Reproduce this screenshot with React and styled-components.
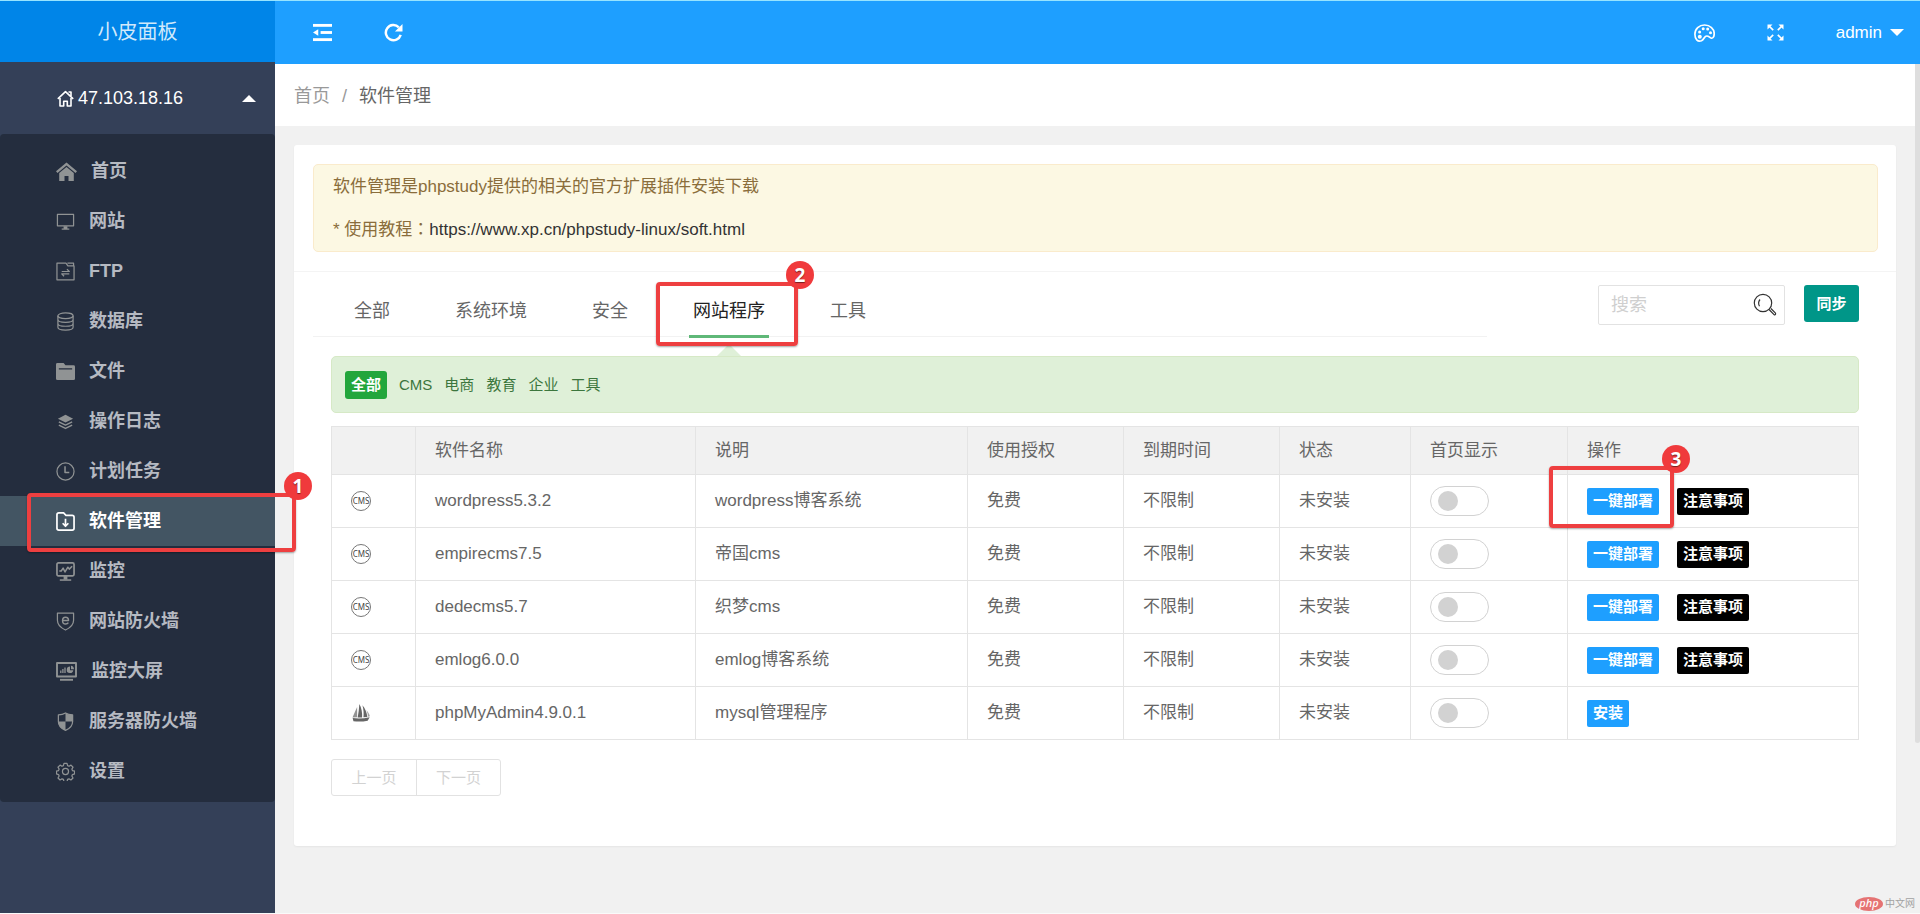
import React, { useState } from "react";
import styled, { createGlobalStyle, css } from "styled-components";

const GlobalStyle = createGlobalStyle`
  * { box-sizing: border-box; }
  body {
    margin: 0;
    background: #f1f1f1;
    color: #666;
    font-family: "Liberation Sans", "Noto Sans CJK SC", sans-serif;
    font-size: 17px;
    line-height: 24px;
  }
  a { color: inherit; text-decoration: none; }
  button, input { font: inherit; color: inherit; }
  button { border: 0; padding: 0; background: none; cursor: pointer; }
  svg { display: block; }
`;

/* ---------- icons ---------- */

const Icon = ({ size = 19, width, box = "0 0 20 20", label, children }) => (
  <svg
    width={width || size}
    height={size}
    viewBox={box}
    fill="none"
    stroke="currentColor"
    strokeWidth="1.3"
    strokeLinejoin="round"
    aria-label={label}
    aria-hidden={label ? undefined : true}
  >
    {children}
  </svg>
);

const FoldIcon = () => (
  <Icon>
    <g fill="currentColor" stroke="none">
      <rect x="0" y="1" width="20" height="3" />
      <rect x="8" y="8.500" width="12" height="3" />
      <rect x="0" y="16" width="20" height="3" />
      <path d="M0 10 5.500 6.500v7z" />
    </g>
  </Icon>
);

const RefreshIcon = () => (
  <Icon>
    <path d="M17.600 12.500A8 8 0 1 1 15.600 4.500" strokeWidth="2.600" />
    <path d="M19.500 1v8h-8z" fill="currentColor" stroke="none" />
  </Icon>
);

const PaletteIcon = () => (
  <Icon size={18} width={21} box="0 0 21 18">
    <path
      d="M7.500 16.700C3.600 18.200.900 15 .900 10.300.900 5 5.200 1 10.500 1c5.700 0 9.700 3.900 9.700 8.500 0 3.200-1.200 5-2.900 4.700-1.700-.400-2.300-2.200-4.600-2.200-2.500 0-2.400 3.500-5.200 4.700z"
      strokeWidth="1.700"
    />
    <g fill="currentColor" stroke="none">
      <circle cx="5.600" cy="8" r="1.500" />
      <circle cx="9.200" cy="4.800" r="1.500" />
      <circle cx="13.700" cy="5.100" r="1.500" />
      <circle cx="16.500" cy="8.800" r="1.500" />
      <circle cx="5.800" cy="12.700" r="2" />
    </g>
  </Icon>
);

const FullscreenIcon = () => (
  <Icon size={17} box="0 0 17 17">
    <path d="M1.500 1.500l4.700 4.700M15.500 1.500l-4.700 4.700M1.500 15.500l4.700-4.700M15.500 15.500l-4.700-4.700" strokeWidth="1.700" />
    <g fill="currentColor" stroke="none">
      <path d="M.500.500h5l-5 5zM16.500.500v5l-5-5zM.500 16.500v-5l5 5zM16.500 16.500h-5l5-5z" />
    </g>
  </Icon>
);

const HouseOutlineIcon = () => (
  <Icon size={17} box="0 0 17 17">
    <g strokeWidth="1.600">
      <path d="M.800 8.800 8.500 1.600l7.700 7.200" />
      <path d="M3 8v8h3.700v-4.700h3.600V16H14V8M14 6V2h-2.500" />
    </g>
  </Icon>
);

const HomeIcon = () => (
  <Icon size={19} width={21} box="0 0 21 19">
    <g fill="currentColor" stroke="none">
      <path d="M10.500.500 0 9.300l1.500 1.700 9-7.500 9 7.500L21 9.300z" />
      <path d="M10.500 5 3.200 11v8h5.300v-5h4v5h5.300v-8z" />
    </g>
  </Icon>
);

const MonitorIcon = () => (
  <Icon>
    <rect x="1.500" y="2.500" width="17" height="12" />
    <path d="M8 15h4v3H8z" fill="currentColor" stroke="none" />
    <path d="M6 18h8" />
  </Icon>
);

const FtpIcon = () => (
  <Icon>
    <path d="M1 18.700V1.300h9.500l2 2.700H19v14.700zM12 1.300h6.500V4" />
    <path d="M6 10h8l-2.500-2.500M14 12.500H6l2.500 2.500" />
  </Icon>
);

const DatabaseIcon = () => (
  <Icon>
    <ellipse cx="10" cy="4" rx="8" ry="3" />
    <path d="M2 4v12c0 1.700 3.600 3 8 3s8-1.300 8-3V4M2 8c0 1.700 3.600 3 8 3s8-1.300 8-3M2 12c0 1.700 3.600 3 8 3s8-1.300 8-3" />
  </Icon>
);

const FolderIcon = () => (
  <Icon>
    <path
      fillRule="evenodd"
      d="M0 2.500Q0 1 1.500 1H8l2 2.500h8.500Q20 3.500 20 5v12.500q0 1.500-1.500 1.500h-17Q0 19 0 17.500zM3 6.500V8h14V6.500z"
      fill="currentColor"
      stroke="none"
    />
  </Icon>
);

const LayersIcon = () => (
  <Icon>
    <path d="M10 3 18 7l-8 4-8-4z" fill="currentColor" stroke="none" />
    <path d="M3 10.300l7 3.500 7-3.500M3 13.800l7 3.500 7-3.500" strokeWidth="1.500" />
  </Icon>
);

const ClockIcon = () => (
  <Icon>
    <circle cx="10" cy="10" r="9" />
    <path d="M9.500 4.500v6.500H14" strokeWidth="1.600" />
  </Icon>
);

const DownloadFolderIcon = () => (
  <Icon>
    <path d="M1 17V3q0-2 2-2h5l2.500 2.500H17q2 0 2 2V17q0 2-2 2H3q-2 0-2-2z" strokeWidth="1.800" />
    <path d="M10 7v8M7 11.800l3 3.200 3-3.200" strokeWidth="1.800" />
  </Icon>
);

const ChartScreenIcon = () => (
  <Icon>
    <rect x="1" y="1" width="18" height="13.500" rx="1.500" strokeWidth="1.800" />
    <path d="M3.500 9.500h2l2-3 2 4 3-5 1.500 2 3-3" strokeWidth="1.600" />
    <path d="M8 14.500h4v4H8z" fill="currentColor" stroke="none" />
    <path d="M4 19h12" strokeWidth="1.600" />
  </Icon>
);

const ShieldEIcon = () => (
  <Icon>
    <path d="M1.500 1.300h17v7.500c0 4.700-3.500 8-8.500 10.200C5 16.800 1.500 13.500 1.500 8.800z" />
    <path d="M7 9h6.200c0-2.300-1.300-3.500-3.200-3.500S6.900 7 6.900 9.100s1.300 3.500 3.300 3.500c1.300 0 2.200-.500 2.800-1.500" strokeWidth="1.500" />
  </Icon>
);

const BigScreenIcon = () => (
  <Icon size={19} width={21} box="0 0 21 19">
    <rect x="1" y="1" width="19" height="13.500" strokeWidth="1.900" />
    <path d="M4.800 8.500v2.500M6.900 7v4M9 5.500v5.500" />
    <path d="M14 4.500a3.300 3.300 0 1 0 3.300 3.800H14z" fill="currentColor" stroke="none" />
    <path d="M15 3.800v3.500h3C17.800 5.200 16.800 4 15 3.800z" fill="currentColor" stroke="none" />
    <path d="M4 17.800h13" strokeWidth="1.900" />
  </Icon>
);

const ShieldIcon = () => (
  <Icon>
    <path d="M10 1c2.300 1.500 4.500 2 7.500 2v7c0 4.500-3 7.500-7.500 9.300C5.500 17.500 2.500 14.500 2.500 10V3C5.500 3 7.700 2.500 10 1z" />
    <path d="M10 1v9h7.500V3C14.500 3 12.300 2.500 10 1zM2.500 10H10v9.300C5.500 17.500 2.500 14.500 2.500 10z" fill="currentColor" stroke="none" />
  </Icon>
);

const GearIcon = () => (
  <Icon>
    <circle cx="10" cy="10" r="3.200" />
    <path d="M8.400 1.500h3.200l.600 2.300 1.500.700 2.100-1.200 2.100 2.200-1.200 2 .600 1.500 2.300.500v3.100l-2.300.600-.600 1.500 1.200 2.100-2.200 2.100-2-1.200-1.500.600-.600 2.300H8.400l-.600-2.300-1.500-.600-2 1.200-2.200-2.100 1.200-2.100-.600-1.500-2.200-.600V9.500L2.700 9l.600-1.500-1.200-2 2.200-2.200 2 1.200 1.500-.700z" />
  </Icon>
);

const SearchIcon = () => (
  <Icon size={24} box="0 0 24 24">
    <circle cx="10" cy="10" r="8.700" strokeWidth="1.200" />
    <path d="M7 6.500c-1.500 1.800-1.700 4.500-.500 6.700" strokeWidth="1.200" />
    <path d="M16 16.500l5.300 5.300q1.700.300 1.200-1.700l-4.600-4.600" strokeWidth="1.200" />
  </Icon>
);

const SailIcon = () => (
  <Icon size={20} box="0 0 18 18" label="phpMyAdmin">
    <g fill="currentColor" stroke="none">
      <path d="M5.500 3.500 1.300 13l4.200-.200z" opacity=".7" />
      <path d="M7.500 1c-.300 4.500-.700 8-1.500 12l4 .100C10.300 8.800 9.500 4.500 7.500 1z" />
      <path d="M10.300 2c1 3.500 1.300 7 .900 10.800l3.500-.300C14.300 8.500 12.800 5 10.300 2z" />
      <path d="M13.800 6.500c.900 1.800 1.400 3.700 1.500 5.800l1.700-.300c-.500-2.300-1.700-4.200-3.200-5.500z" opacity=".6" />
      <path d="M1.500 13.600c4.500.600 10 .500 15.300-.700l-1.800 3c-4.500.900-8.500.900-12.800.500z" />
    </g>
  </Icon>
);

/* ---------- frame ---------- */

const Page = styled.div`
  position: relative;
  display: flex;
  min-height: 100vh;
  border-top: 1px solid #97e4ff;
  border-bottom: 1px solid #fafafa;
`;

const Sidebar = styled.aside`
  position: relative;
  z-index: 2;
  flex: 0 0 275px;
  background: #344058;
`;

const Brand = styled.h1`
  display: flex;
  align-items: center;
  justify-content: center;
  height: 61px;
  margin: 0;
  background: #0085e8;
  color: #d0e9fb;
  font-size: 20px;
  font-weight: 400;
`;

const Host = styled.button`
  display: flex;
  align-items: center;
  gap: 4px;
  width: 100%;
  height: 72px;
  padding: 0 19px 0 57px;
  color: #fff;
  font-size: 18px;
`;

const Caret = styled.span`
  border: 7px solid transparent;
  ${({ $up }) =>
    $up
      ? css`
          border-top-width: 0;
          border-bottom-color: #fff;
          margin-left: auto;
        `
      : css`
          border-bottom-width: 0;
          border-top-color: #fff;
        `}
`;

const Menu = styled.nav`
  padding: 12px 0 6px;
  border-radius: 4px;
  background: #242d3e;
`;

const MenuLink = styled.a`
  position: relative;
  display: flex;
  align-items: center;
  gap: 14px;
  height: 50px;
  padding-left: 56px;
  font-size: 18px;
  font-weight: 700;
  color: ${({ $active }) => ($active ? "#fff" : "#b6bac2")};
  background: ${({ $active }) => ($active ? "#435563" : "transparent")};
  svg { color: ${({ $active }) => ($active ? "#fff" : "#909394")}; }
`;

const Main = styled.div`
  flex: 1;
  min-width: 0;
  display: flex;
  flex-direction: column;
`;

const TopBar = styled.header`
  display: flex;
  align-items: center;
  justify-content: space-between;
  height: 63px;
  padding: 0 16px 0 38px;
  background: #1e9fff;
  color: #fff;
`;

const BarGroup = styled.div`
  display: flex;
  align-items: center;
  gap: 52px;
`;

const BarButton = styled.button`
  display: flex;
  align-items: center;
  gap: 8px;
`;

const Scroller = styled.div`
  flex: 1;
  display: flex;
`;

const Content = styled.div`
  flex: 1;
  min-width: 0;
`;

const ScrollTrack = styled.div`
  flex: 0 0 5px;
`;

const ScrollThumb = styled.div`
  height: 80%;
  border-radius: 0 0 3px 3px;
  background: #dedede;
`;

const Breadcrumb = styled.nav`
  display: flex;
  align-items: center;
  gap: 12px;
  height: 62px;
  padding: 2px 0 0 19px;
  background: #fff;
  font-size: 18px;
  color: #999;
  strong { font-weight: 400; color: #666; }
`;

const Card = styled.main`
  margin: 19px;
  padding-bottom: 50px;
  border-radius: 3px;
  background: #fff;
  box-shadow: 0 1px 2px rgba(0, 0, 0, 0.05);
`;

/* ---------- content ---------- */

const NoticeArea = styled.div`
  padding: 19px 18px 19px 19px;
  border-bottom: 1px solid #f4f4f4;
`;

const Notice = styled.div`
  padding: 0 19px;
  border: 1px solid #faebcc;
  border-radius: 5px;
  background: #fcf8e3;
  color: #8a6d3b;
  line-height: 43px;
  p { margin: 0; }
  a { color: #333; }
`;

const CenteredColon = styled.span`
  font-family: "Noto Sans CJK TC", sans-serif;
  line-height: 1;
`;

const TabRow = styled.div`
  display: flex;
  align-items: flex-start;
  padding: 13px 37px 0 19px;
`;

const Tabs = styled.div`
  flex: 1;
  display: flex;
  gap: 1px;
  height: 52px;
  margin-right: 111px;
  padding-left: 9px;
  border-bottom: 1px solid #f2f2f2;
`;

const Tab = styled.button`
  position: relative;
  padding: 0 32px;
  font-size: 18px;
  color: ${({ $active }) => ($active ? "#222" : "#666")};
  ${({ $active }) =>
    $active &&
    css`
      &::before {
        content: "";
        position: absolute;
        left: 28px;
        right: 28px;
        bottom: -2px;
        height: 3px;
        background: #5fb878;
      }
      &::after {
        content: "";
        position: absolute;
        left: calc(50% - 12px);
        bottom: -20px;
        border: 12px solid transparent;
        border-top-width: 0;
        border-bottom-color: #dff0d8;
      }
    `}
`;

const SearchBox = styled.label`
  display: flex;
  align-items: center;
  width: 187px;
  height: 40px;
  margin-right: 19px;
  padding: 0 7px 0 12px;
  border: 1px solid #e2e2e2;
  border-radius: 2px;
  color: #333;
`;

const SearchInput = styled.input`
  flex: 1;
  min-width: 0;
  padding: 0;
  border: 0;
  outline: 0;
  background: none;
  font-size: 18px;
  &::placeholder { color: #cfcfcf; }
`;

const SyncButton = styled.button`
  width: 55px;
  height: 37px;
  border-radius: 3px;
  background: #009688;
  color: #fff;
  font-size: 15px;
  font-weight: 700;
`;

const Section = styled.section`
  padding: 19px 37px 0;
`;

const Filters = styled.div`
  display: flex;
  align-items: center;
  gap: 12px;
  height: 57px;
  margin-bottom: 13px;
  padding: 0 13px;
  border: 1px solid #d6e9c6;
  border-radius: 5px;
  background: #dff0d8;
  color: #3c763d;
`;

const Filter = styled.button`
  font-size: 15px;
  ${({ $active }) =>
    $active &&
    css`
      height: 28px;
      padding: 0 6px;
      border-radius: 3px;
      background: #23a63c;
      color: #fff;
      font-weight: 700;
    `}
`;

const Table = styled.table`
  width: 100%;
  table-layout: fixed;
  border-collapse: collapse;
  th, td {
    height: 53px;
    padding: 0 19px;
    border: 1px solid #e4e4e4;
    text-align: left;
    font-weight: 400;
  }
  th { height: 48px; background: #f1f1f1; }
`;

const CmsBadge = styled.span`
  display: flex;
  align-items: center;
  justify-content: center;
  width: 20px;
  height: 20px;
  border: 1px solid #777;
  border-radius: 50%;
  font-family: "Noto Sans", sans-serif;
  font-size: 8px;
  line-height: 8px;
  color: #444;
`;

const Switch = styled.input`
  appearance: none;
  display: block;
  width: 59px;
  height: 30px;
  margin: 0;
  padding: 4px 7px;
  border: 1px solid #d2d2d2;
  border-radius: 15px;
  background: #fff;
  cursor: pointer;
  &::before {
    content: "";
    display: block;
    width: 20px;
    height: 20px;
    border-radius: 50%;
    background: #d2d2d2;
  }
  &:checked { border-color: #5fb878; }
  &:checked::before { margin-left: auto; background: #5fb878; }
`;

const Actions = styled.div`
  display: flex;
  gap: 18px;
`;

const ActionButton = styled.button`
  position: relative;
  height: 27px;
  padding: 0 6px;
  border-radius: 2px;
  background: ${({ $dark }) => ($dark ? "#000" : "#1e9fff")};
  color: #fff;
  font-size: 15px;
  font-weight: 700;
`;

const Pager = styled.div`
  display: inline-flex;
  margin-top: 19px;
  border: 1px solid #e2e2e2;
  border-radius: 3px;
`;

const PageButton = styled.button`
  width: 84px;
  height: 35px;
  font-size: 15px;
  color: #d2d2d2;
  & + & { border-left: 1px solid #e2e2e2; }
`;

/* ---------- step markers drawn over the page ---------- */

const Marker = styled.span`
  position: absolute;
  z-index: 3;
  inset: ${({ $inset }) => $inset};
  border: 4px solid #ee3f40;
  border-radius: 4px;
  box-shadow: 0 1px 2px rgba(0, 0, 0, 0.35);
  pointer-events: none;
`;

const MarkerNumber = styled.span`
  position: absolute;
  top: -25px;
  right: -20px;
  display: flex;
  align-items: center;
  justify-content: center;
  width: 28px;
  height: 28px;
  border-radius: 50%;
  background: #f03a3c;
  color: #fff;
  font-family: "Noto Sans", sans-serif;
  font-size: 19px;
  font-weight: 700;
  text-shadow: 0 1px 1px rgba(0, 0, 0, 0.5);
`;

const Step = ({ n, inset }) => (
  <Marker $inset={inset}>
    <MarkerNumber>{n}</MarkerNumber>
  </Marker>
);

const Watermark = styled.div`
  position: absolute;
  right: 5px;
  bottom: 2px;
  display: flex;
  align-items: center;
  gap: 2px;
  color: #a2a2a2;
  font-size: 10px;
  line-height: 14px;
`;

const PhpMark = styled.span`
  width: 28px;
  height: 14px;
  border-radius: 50%;
  background: #e57373;
  color: #fff;
  font-family: "Noto Sans", sans-serif;
  font-size: 11px;
  font-style: italic;
  font-weight: 500;
  line-height: 12px;
  text-align: center;
`;

/* ---------- data ---------- */

const menu = [
  ["首页", HomeIcon],
  ["网站", MonitorIcon],
  ["FTP", FtpIcon],
  ["数据库", DatabaseIcon],
  ["文件", FolderIcon],
  ["操作日志", LayersIcon],
  ["计划任务", ClockIcon],
  ["软件管理", DownloadFolderIcon],
  ["监控", ChartScreenIcon],
  ["网站防火墙", ShieldEIcon],
  ["监控大屏", BigScreenIcon],
  ["服务器防火墙", ShieldIcon],
  ["设置", GearIcon],
];

const tabs = ["全部", "系统环境", "安全", "网站程序", "工具"];
const filters = ["全部", "CMS", "电商", "教育", "企业", "工具"];
const headings = ["", "软件名称", "说明", "使用授权", "到期时间", "状态", "首页显示", "操作"];
const columnWidths = [84, 280, 272, 156, 156, 131, 157];

const software = [
  { name: "wordpress5.3.2", about: "wordpress博客系统", cms: true, step: 3 },
  { name: "empirecms7.5", about: "帝国cms", cms: true },
  { name: "dedecms5.7", about: "织梦cms", cms: true },
  { name: "emlog6.0.0", about: "emlog博客系统", cms: true },
  { name: "phpMyAdmin4.9.0.1", about: "mysql管理程序", cms: false },
];

function SoftwareRow({ item }) {
  const [shown, setShown] = useState(false);
  return (
    <tr>
      <td>{item.cms ? <CmsBadge>CMS</CmsBadge> : <SailIcon />}</td>
      <td>{item.name}</td>
      <td>{item.about}</td>
      <td>免费</td>
      <td>不限制</td>
      <td>未安装</td>
      <td>
        <Switch
          type="checkbox"
          role="switch"
          aria-label={`首页显示 ${item.name}`}
          checked={shown}
          onChange={(e) => setShown(e.target.checked)}
        />
      </td>
      <td>
        <Actions>
          <ActionButton type="button">
            {item.cms ? "一键部署" : "安装"}
            {item.step && <Step n={item.step} inset="-22px -15px -13px -38px" />}
          </ActionButton>
          {item.cms && (
            <ActionButton type="button" $dark>
              注意事项
            </ActionButton>
          )}
        </Actions>
      </td>
    </tr>
  );
}

export default function App() {
  return (
    <>
      <GlobalStyle />
      <Page>
        <Sidebar>
          <Brand>小皮面板</Brand>
          <Host type="button">
            <HouseOutlineIcon />
            47.103.18.16
            <Caret $up />
          </Host>
          <Menu>
            {menu.map(([label, Glyph]) => {
              const active = label === "软件管理";
              return (
                <MenuLink key={label} href="#" $active={active}>
                  <Glyph />
                  {label}
                  {active && <Step n={1} inset="-3px -21px -6px 27px" />}
                </MenuLink>
              );
            })}
          </Menu>
        </Sidebar>

        <Main>
          <TopBar>
            <BarGroup>
              <BarButton type="button" aria-label="收起菜单"><FoldIcon /></BarButton>
              <BarButton type="button" aria-label="刷新"><RefreshIcon /></BarButton>
            </BarGroup>
            <BarGroup>
              <BarButton type="button" aria-label="主题"><PaletteIcon /></BarButton>
              <BarButton type="button" aria-label="全屏"><FullscreenIcon /></BarButton>
              <BarButton type="button">
                admin
                <Caret />
              </BarButton>
            </BarGroup>
          </TopBar>

          <Scroller>
            <Content>
              <Breadcrumb>
                <a href="#">首页</a>
                <span>/</span>
                <strong>软件管理</strong>
              </Breadcrumb>

              <Card>
                <NoticeArea>
                  <Notice>
                    <p>软件管理是phpstudy提供的相关的官方扩展插件安装下载</p>
                    <p>
                      * 使用教程<CenteredColon>：</CenteredColon>
                      <a href="#">https://www.xp.cn/phpstudy-linux/soft.html</a>
                    </p>
                  </Notice>
                </NoticeArea>

                <TabRow>
                  <Tabs>
                    {tabs.map((label) => {
                      const active = label === "网站程序";
                      return (
                        <Tab key={label} type="button" $active={active}>
                          {label}
                          {active && <Step n={2} inset="-3px -1px -10px -5px" />}
                        </Tab>
                      );
                    })}
                  </Tabs>
                  <SearchBox>
                    <SearchInput type="text" placeholder="搜索" aria-label="搜索" />
                    <SearchIcon />
                  </SearchBox>
                  <SyncButton type="button">同步</SyncButton>
                </TabRow>

                <Section>
                  <Filters>
                    {filters.map((label, i) => (
                      <Filter key={label} type="button" $active={i === 0}>
                        {label}
                      </Filter>
                    ))}
                  </Filters>

                  <Table>
                    <colgroup>
                      {columnWidths.map((width, i) => (
                        <col key={i} width={width} />
                      ))}
                      <col />
                    </colgroup>
                    <thead>
                      <tr>
                        {headings.map((label) => (
                          <th key={label} scope="col">{label}</th>
                        ))}
                      </tr>
                    </thead>
                    <tbody>
                      {software.map((item) => (
                        <SoftwareRow key={item.name} item={item} />
                      ))}
                    </tbody>
                  </Table>

                  <Pager>
                    <PageButton type="button" disabled>上一页</PageButton>
                    <PageButton type="button" disabled>下一页</PageButton>
                  </Pager>
                </Section>
              </Card>
            </Content>
            <ScrollTrack>
              <ScrollThumb />
            </ScrollTrack>
          </Scroller>
        </Main>

        <Watermark>
          <PhpMark>php</PhpMark>
          中文网
        </Watermark>
      </Page>
    </>
  );
}
